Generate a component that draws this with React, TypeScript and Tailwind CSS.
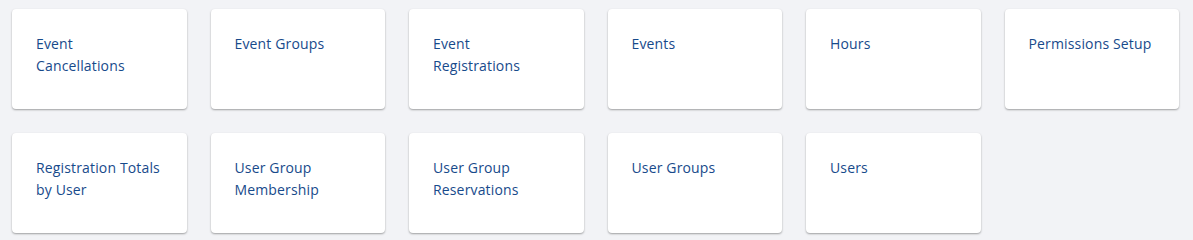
import React from 'react';

const reports = [
  'Event Cancellations',
  'Event Groups',
  'Event Registrations',
  'Events',
  'Hours',
  'Permissions Setup',
  'Registration Totals by User',
  'User Group Membership',
  'User Group Reservations',
  'User Groups',
  'Users',
];

// names that wrap onto two lines in the reference
const breaks: Record<string, [string, string]> = {
  'Event Cancellations': ['Event', 'Cancellations'],
  'Event Registrations': ['Event', 'Registrations'],
  'Registration Totals by User': ['Registration Totals', 'by User'],
  'User Group Membership': ['User Group', 'Membership'],
  'User Group Reservations': ['User Group', 'Reservations'],
};

const ReportCard: React.FC<{ name: string }> = ({ name }) => {
  const lines = breaks[name];
  return (
    <a
      href="#"
      className="block h-[100px] rounded-[4px] bg-white px-6 pt-6 text-[14px] leading-[22px] tracking-[0.15px] text-[#174a8b] shadow-[0_1px_2px_rgba(0,0,0,0.35)]"
    >
      {lines ? (
        <>
          <span className="block">{lines[0]}</span>
          <span className="block">{lines[1]}</span>
        </>
      ) : (
        name
      )}
    </a>
  );
};

export default function App() {
  return (
    <div
      className="min-h-[240px] w-full bg-[#f2f3f6] pl-3 pr-[14px] pt-[9px]"
      style={{ fontFamily: '"Open Sans", "Noto Sans", sans-serif' }}
    >
      <div className="grid grid-cols-6 gap-x-6 gap-y-6">
        {reports.map((r) => (
          <ReportCard key={r} name={r} />
        ))}
      </div>
    </div>
  );
}
